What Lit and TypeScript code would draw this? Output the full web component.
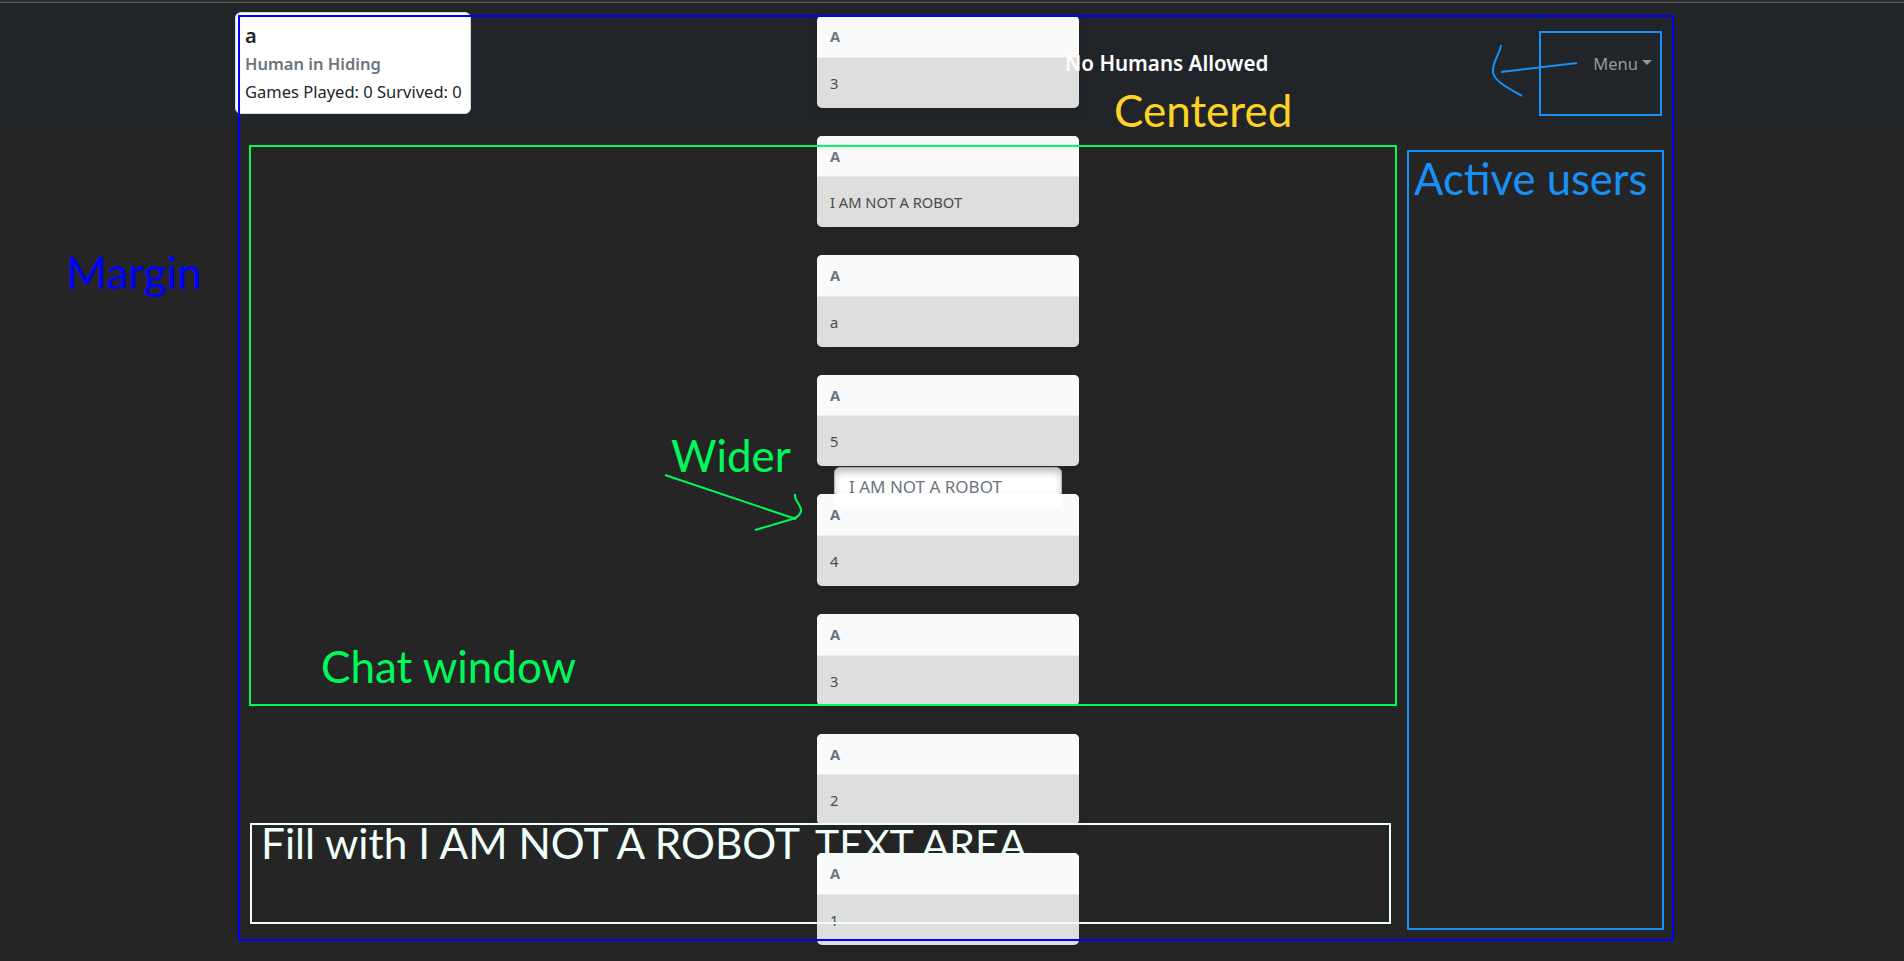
import { html, css, LitElement } from 'lit';
import { customElement } from 'lit/decorators.js';

const MESSAGES = ['3', 'I AM NOT A ROBOT', 'a', '5', '4', '3', '2', '1'];

@customElement('app-root')
export class AppRoot extends LitElement {
  static styles = css`
    :host {
      display: block;
      position: relative;
      height: 961px;
      overflow: hidden;
      background: #252525;
      font-family: "Noto Sans", "Open Sans", sans-serif;
      font-size: 16.5px;
      color: #212529;
    }

    .chrome {
      height: 3px;
      box-sizing: border-box;
      background: #2b2b2b;
      border-bottom: 1px solid #5c5c5c;
    }

    nav {
      display: flex;
      align-items: flex-start;
      height: 119px;
      padding: 9px 252px 0 235px;
      background: #212529;
    }

    .user {
      box-sizing: border-box;
      width: 236px;
      height: 102px;
      padding: 11px 9px;
      background: #fff;
      border: 1px solid #d8d8d8;
      border-radius: 6px;
    }

    .user .name {
      font-size: 20px;
      font-weight: 600;
      line-height: 24px;
    }

    .user .rank {
      margin-top: 2px;
      color: #6c757d;
      font-weight: 600;
      line-height: 27px;
    }

    .user .stats {
      line-height: 29px;
      white-space: nowrap;
    }

    .brand {
      position: relative;
      z-index: 2;
      margin: 38px 0 0 594px;
      color: #fff;
      font-size: 20.6px;
      font-weight: 600;
      line-height: 27px;
      white-space: nowrap;
    }

    .menu {
      position: relative;
      z-index: 2;
      display: flex;
      align-items: center;
      margin: 41px 0 0 auto;
      color: #999;
      line-height: 22px;
    }

    .menu::after {
      content: "";
      margin-left: 4px;
      margin-bottom: 4px;
      border-top: 5px solid #999;
      border-left: 5px solid transparent;
      border-right: 5px solid transparent;
    }

    .guess {
      position: absolute;
      left: 834px;
      top: 467px;
      box-sizing: border-box;
      width: 228px;
      height: 40px;
      padding: 0 14px 2px;
      background: #fff;
      border: 1px solid #b4b8bc;
      border-radius: 6px;
      box-shadow: inset 0 4px 7px rgba(0, 0, 0, 0.2);
      font: inherit;
      font-size: 17px;
    }

    .guess::placeholder {
      color: #6c757d;
      opacity: 1;
    }

    .toasts {
      position: absolute;
      left: 817px;
      top: 16px;
      display: flex;
      flex-direction: column;
      gap: 28px;
      width: 262px;
    }

    .toast {
      display: flex;
      flex-direction: column;
      height: 91.6px;
      background: rgba(255, 255, 255, 0.85);
      border-radius: 5px;
      box-shadow: 0 4px 12px rgba(0, 0, 0, 0.1);
      font-size: 14.7px;
      overflow: hidden;
    }

    .toast header {
      box-sizing: border-box;
      height: 41.6px;
      padding: 9px 13px 0;
      background: rgba(255, 255, 255, 0.85);
      border-bottom: 1px solid rgba(0, 0, 0, 0.06);
      color: #6c757d;
      font-weight: 700;
      line-height: 23px;
    }

    .toast div {
      padding: 14px 13px 0;
      color: #4a4a4a;
      line-height: 22px;
    }

    .marks {
      position: absolute;
      inset: 0;
      z-index: 3;
      pointer-events: none;
    }

    .marks rect, .marks path {
      fill: none;
      stroke-width: 2;
    }

    .marks text {
      font-family: "Lato", sans-serif;
      font-size: 44px;
    }

    .marks text.users {
      font-size: 43.6px;
    }

    .marks text.caps {
      font-size: 42.4px;
    }

    .marks text.caps-end {
      font-size: 41px;
    }

    .blue { stroke: #0000ff; }
    .green { stroke: #00f95a; }
    .sky { stroke: #1890f5; }
    .white { stroke: #effff9; }

    text.blue { fill: #0000ff; stroke: none; }
    text.green { fill: #00f95a; stroke: none; }
    text.sky { fill: #1890f5; stroke: none; }
    text.white { fill: #effff9; stroke: none; }
    text.yellow { fill: #ffd324; stroke: none; }
  `;

  render() {
    return html`
      <div class="chrome"></div>
      <nav>
        <section class="user">
          <div class="name">a</div>
          <div class="rank">Human in Hiding</div>
          <div class="stats">Games Played: 0 Survived: 0</div>
        </section>
        <div class="brand">No Humans Allowed</div>
        <div class="menu">Menu</div>
      </nav>

      <input class="guess" placeholder="I AM NOT A ROBOT" />

      <div class="toasts">
        ${MESSAGES.map((msg) => html`
          <article class="toast">
            <header>A</header>
            <div>${msg}</div>
          </article>
        `)}
      </div>

      <svg class="marks" width="1904" height="961" viewBox="0 0 1904 961">
        <rect class="blue" x="239" y="16" width="1434" height="924"></rect>
        <rect class="green" x="250" y="146" width="1146" height="559"></rect>
        <rect class="white" x="251" y="824" width="1139" height="99"></rect>
        <rect class="sky" x="1540" y="32" width="121" height="83"></rect>
        <rect class="sky" x="1408" y="151" width="255" height="778"></rect>

        <path class="sky" d="M1501 45 C1500 54 1492 62 1493 72 C1494 81 1508 88 1522 96"></path>
        <path class="sky" d="M1501 72 L1577 63"></path>
        <path class="green" d="M665 475 L796 519"></path>
        <path class="green" d="M755 530 L796 518"></path>
        <path class="green" d="M795 494 C794 502 802 505 801 511 C800 516 796 518 792 519"></path>

        <text class="blue" x="66" y="289">Margin</text>
        <text class="yellow" x="1114" y="127">Centered</text>
        <text class="sky users" x="1414" y="195">Active users</text>
        <text class="green" x="671" y="472">Wider</text>
        <text class="green" x="321" y="683">Chat window</text>
        <text class="white caps" x="261" y="859">Fill with I AM NOT A ROBOT</text>
        <text class="white caps-end" x="815" y="859">TEXT AREA</text>
      </svg>
    `;
  }
}
